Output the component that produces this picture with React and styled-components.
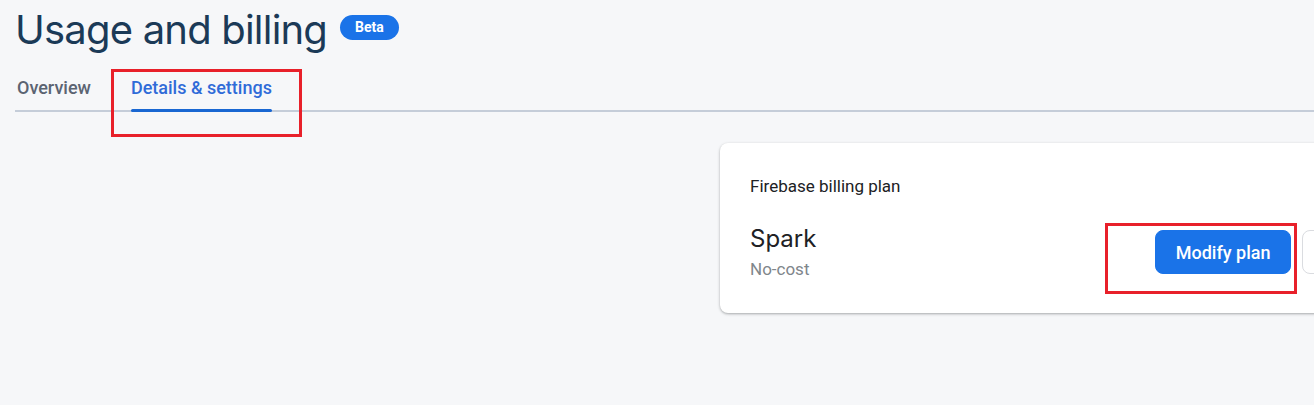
import React from 'react';
import styled, { createGlobalStyle } from 'styled-components';

const GlobalStyle = createGlobalStyle`
  html, body {
    margin: 0;
    padding: 0;
    background: #f6f7f9;
    overflow: hidden;
  }
  body {
    font-family: Roboto, "Liberation Sans", sans-serif;
  }
`;

const Page = styled.div`
  width: 1314px;
  height: 405px;
  padding: 0 0 0 15px;
  box-sizing: border-box;
`;

const Header = styled.div`
  display: flex;
  align-items: center;
  gap: 13px;
  height: 58px;
`;

const Title = styled.h1`
  margin: 0;
  font-family: Inter, "Open Sans", sans-serif;
  font-size: 40px;
  font-weight: 400;
  letter-spacing: -0.8px;
  color: #1b3a57;
`;

const Badge = styled.span`
  display: inline-flex;
  align-items: center;
  justify-content: center;
  height: 25px;
  margin-top: -4px;
  padding: 0 15px;
  border-radius: 13px;
  background: #1a73e8;
  color: #fff;
  font-size: 14px;
  font-weight: 700;
`;

const TabBar = styled.div`
  display: flex;
  gap: 40px;
  padding-left: 2px;
  border-bottom: 2px solid #c5cdd9;
`;

const Tab = styled.div`
  position: relative;
  padding: 19px 0 12px;
  font-size: 18px;
  font-weight: 500;
  color: ${p => (p.active ? '#2f6bd8' : '#5b6472')};

  &::after {
    content: '';
    display: ${p => (p.active ? 'block' : 'none')};
    position: absolute;
    left: 0;
    right: 0;
    bottom: -2px;
    height: 3px;
    border-radius: 2px;
    background: #1967d2;
  }
`;

const Highlight = styled.div`
  position: absolute;
  top: ${p => p.top}px;
  left: ${p => p.left}px;
  right: ${p => p.right}px;
  bottom: ${p => p.bottom}px;
  border: 3px solid #e8202a;
  pointer-events: none;
`;

const Content = styled.div`
  display: grid;
  grid-template-columns: 705px 747px;
  padding-top: 31px;
`;

const Card = styled.div`
  grid-column: 2;
  background: #fff;
  border-radius: 8px;
  box-shadow: 0 1px 3px rgba(60, 64, 67, 0.3), 0 1px 2px rgba(60, 64, 67, 0.15);
  padding: 33px 30px 26px;
  height: 170px;
  box-sizing: border-box;
`;

const CardLabel = styled.div`
  font-size: 17px;
  line-height: 20px;
  color: #202124;
`;

const PlanRow = styled.div`
  display: flex;
  align-items: center;
  margin-top: 28px;
`;

const PlanInfo = styled.div`
  flex: 1;
`;

const PlanName = styled.div`
  font-family: Inter, "Open Sans", sans-serif;
  font-size: 24px;
  line-height: 30px;
  color: #202124;
`;

const PlanCost = styled.div`
  margin-top: 4px;
  font-size: 17px;
  line-height: 22px;
  color: #80868b;
`;

const Actions = styled.div`
  display: flex;
  gap: 11px;
`;

const Button = styled.button`
  position: relative;
  height: 44px;
  padding: 0 20px;
  border-radius: 8px;
  font-family: Roboto, "Liberation Sans", sans-serif;
  font-size: 18px;
  font-weight: 500;
  cursor: pointer;
  border: 1px solid ${p => (p.primary ? '#1a73e8' : '#dadce0')};
  background: ${p => (p.primary ? '#1a73e8' : '#fff')};
  color: ${p => (p.primary ? '#fff' : '#1a73e8')};
`;

const App = () => (
  <Page>
    <GlobalStyle />
    <Header>
      <Title>Usage and billing</Title>
      <Badge>Beta</Badge>
    </Header>
    <TabBar>
      <Tab>Overview</Tab>
      <Tab active>
        Details &amp; settings
        <Highlight top={11} left={-20} right={-30} bottom={-27} />
      </Tab>
    </TabBar>
    <Content>
      <Card>
        <CardLabel>Firebase billing plan</CardLabel>
        <PlanRow>
          <PlanInfo>
            <PlanName>Spark</PlanName>
            <PlanCost>No-cost</PlanCost>
          </PlanInfo>
          <Actions>
            <Button primary>
              Modify plan
              <Highlight top={-8} left={-51} right={-7} bottom={-21} />
            </Button>
            <Button>View usage</Button>
          </Actions>
        </PlanRow>
      </Card>
    </Content>
  </Page>
);

export default App;
